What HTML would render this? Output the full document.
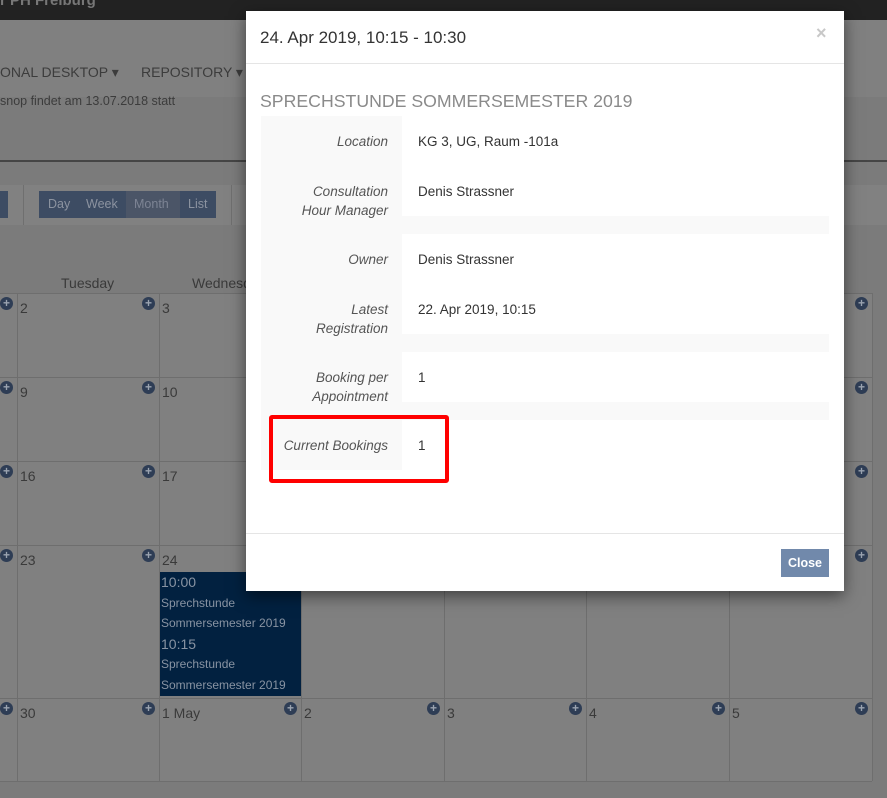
<!DOCTYPE html>
<html><head><meta charset="utf-8">
<style>
*{margin:0;padding:0;box-sizing:border-box}
body{width:887px;height:798px;overflow:hidden;background:#7b7b7b;font-family:"Liberation Sans",sans-serif;position:relative}
.a{position:absolute}
.t{font-size:14px;color:#3a3a3a;white-space:nowrap}
.plus{position:absolute;width:13px;height:13px;border-radius:50%;background:#2e3d55;color:#9aa3b0;font-size:12px;font-weight:bold;line-height:13px;text-align:center}
.num{position:absolute;font-size:14px;color:#3a3a3a}
.vl{position:absolute;width:1px;background:#6e6e6e}
.hl{position:absolute;height:1px;background:#6e6e6e;left:0;width:872px}
.lab{position:absolute;right:14px;width:130px;text-align:right;font-style:italic;font-size:13.5px;color:#555;line-height:19px}
.val{position:absolute;left:157px;font-size:13.5px;color:#333;line-height:19px}
</style></head><body>
<div class="a" style="left:0;top:0;width:887px;height:20px;background:#222"></div>
<div class="a t" style="left:0;top:-8px;color:#777;font-weight:bold;font-size:15px">r PH Freiburg</div>
<div class="a" style="left:0;top:20px;width:887px;height:77px;background:#808080"></div>
<div class="a t" style="left:0;top:64px;color:#3c3c3c;font-size:14px">ONAL DESKTOP ▾</div>
<div class="a t" style="left:141px;top:64px;color:#3c3c3c;font-size:14px">REPOSITORY ▾</div>
<div class="a t" style="left:0;top:94px;color:#3c3c3c;font-size:12.5px">snop findet am 13.07.2018 statt</div>
<div class="a" style="left:0;top:160px;width:887px;height:2px;background:#454545"></div>
<div class="a" style="left:0;top:185px;width:887px;height:40px;background:#818181"></div>
<div class="a" style="left:23px;top:185px;width:1px;height:40px;background:#6f6f6f"></div>
<div class="a" style="left:231px;top:185px;width:1px;height:40px;background:#6f6f6f"></div>
<div class="a" style="left:0;top:191px;width:8px;height:27px;background:#3d4c63"></div>
<div class="a" style="left:39px;top:191px;width:177px;height:27px;background:#3d4c63"></div>
<div class="a" style="left:126px;top:191px;width:54px;height:27px;background:#4b5567"></div>
<div class="a t" style="left:48px;top:197px;font-size:12.5px;color:#8c93a0">Day</div>
<div class="a t" style="left:86px;top:197px;font-size:12.5px;color:#8c93a0">Week</div>
<div class="a t" style="left:134px;top:197px;font-size:12.5px;color:#7d8494">Month</div>
<div class="a t" style="left:188px;top:197px;font-size:12.5px;color:#8c93a0">List</div>

<div class="a" style="left:0;top:293px;width:872px;height:488px;background:#808080"></div>
<div class="a t" style="left:61px;top:275px;color:#3a3a3a">Tuesday</div>
<div class="a t" style="left:192px;top:275px;color:#3a3a3a">Wednesday</div>
<div class="hl" style="top:293px"></div>
<div class="hl" style="top:377px"></div>
<div class="hl" style="top:461px"></div>
<div class="hl" style="top:545px"></div>
<div class="hl" style="top:698px"></div>
<div class="hl" style="top:781px"></div>
<div class="vl" style="left:17px;top:293px;height:488px"></div>
<div class="vl" style="left:159px;top:293px;height:488px"></div>
<div class="vl" style="left:301px;top:293px;height:488px"></div>
<div class="vl" style="left:444px;top:293px;height:488px"></div>
<div class="vl" style="left:586px;top:293px;height:488px"></div>
<div class="vl" style="left:729px;top:293px;height:488px"></div>
<div class="vl" style="left:872px;top:293px;height:488px"></div>

<div class="plus" style="left:0;top:297px">+</div><div class="plus" style="left:142px;top:297px">+</div><div class="plus" style="left:855px;top:297px">+</div>
<div class="num" style="left:20px;top:300px">2</div><div class="num" style="left:162px;top:300px">3</div>
<div class="plus" style="left:0;top:381px">+</div><div class="plus" style="left:142px;top:381px">+</div><div class="plus" style="left:855px;top:381px">+</div>
<div class="num" style="left:20px;top:384px">9</div><div class="num" style="left:162px;top:384px">10</div>
<div class="plus" style="left:0;top:465px">+</div><div class="plus" style="left:142px;top:465px">+</div><div class="plus" style="left:855px;top:465px">+</div>
<div class="num" style="left:20px;top:468px">16</div><div class="num" style="left:162px;top:468px">17</div>
<div class="plus" style="left:0;top:549px">+</div><div class="plus" style="left:142px;top:549px">+</div><div class="plus" style="left:855px;top:549px">+</div>
<div class="num" style="left:20px;top:552px">23</div><div class="num" style="left:162px;top:552px">24</div>
<div class="plus" style="left:0;top:702px">+</div><div class="plus" style="left:142px;top:702px">+</div><div class="plus" style="left:284px;top:702px">+</div><div class="plus" style="left:427px;top:702px">+</div><div class="plus" style="left:569px;top:702px">+</div><div class="plus" style="left:712px;top:702px">+</div><div class="plus" style="left:855px;top:702px">+</div>
<div class="num" style="left:20px;top:705px">30</div><div class="num" style="left:162px;top:705px">1 May</div><div class="num" style="left:304px;top:705px">2</div><div class="num" style="left:447px;top:705px">3</div><div class="num" style="left:589px;top:705px">4</div><div class="num" style="left:732px;top:705px">5</div>

<div class="a" style="left:160px;top:572px;width:141px;height:124px;background:#022140;color:#8893a2;font-size:12px;line-height:20.6px;padding-left:1px">
<div style="font-size:14px">10:00</div><div>Sprechstunde</div><div>Sommersemester 2019</div><div style="font-size:14px">10:15</div><div>Sprechstunde</div><div>Sommersemester 2019</div></div>

<div class="a" style="left:246px;top:11px;width:598px;height:580px;background:#fff;box-shadow:0 5px 15px rgba(0,0,0,.5)">
  <div class="a t" style="left:14px;top:17px;font-size:17px;color:#333">24. Apr 2019, 10:15 - 10:30</div>
  <div class="a" style="left:570px;top:12px;font-size:18px;color:#c8c8c8;font-weight:bold">×</div>
  <div class="a" style="left:0;top:52px;width:598px;height:1px;background:#e5e5e5"></div>
  <div class="a t" style="left:14px;top:80px;font-size:17.7px;color:#8a8a8a">SPRECHSTUNDE SOMMERSEMESTER 2019</div>
  <div class="a" style="left:15px;top:105px;width:568px;height:354px">
    <div class="a" style="left:0;top:0;width:141px;height:354px;background:#f9f9f9"></div>
    <div class="a" style="left:141px;top:100px;width:427px;height:18px;background:#f9f9f9"></div>
    <div class="a" style="left:141px;top:218px;width:427px;height:18px;background:#f9f9f9"></div>
    <div class="a" style="left:141px;top:286px;width:427px;height:18px;background:#f9f9f9"></div>
    <div class="a" style="left:0;top:0;width:141px">
      <div class="lab" style="top:16px">Location</div>
      <div class="lab" style="top:66px">Consultation<br>Hour Manager</div>
      <div class="lab" style="top:134px">Owner</div>
      <div class="lab" style="top:184px">Latest<br>Registration</div>
      <div class="lab" style="top:252px">Booking per<br>Appointment</div>
      <div class="lab" style="top:320px">Current Bookings</div>
    </div>
    <div class="val" style="top:16px">KG 3, UG, Raum -101a</div>
    <div class="val" style="top:66px">Denis Strassner</div>
    <div class="val" style="top:134px">Denis Strassner</div>
    <div class="val" style="top:184px">22. Apr 2019, 10:15</div>
    <div class="val" style="top:252px">1</div>
    <div class="val" style="top:320px">1</div>
  </div>
  <div class="a" style="left:23px;top:404px;width:180px;height:68px;border:4px solid #f00;border-radius:3px"></div>
  <div class="a" style="left:0;top:522px;width:598px;height:1px;background:#e5e5e5"></div>
  <div class="a" style="left:535px;top:538px;width:48px;height:28px;background:#7189ab;color:#fff;font-size:12.5px;font-weight:bold;text-align:center;line-height:28px">Close</div>
</div>
</body></html>
